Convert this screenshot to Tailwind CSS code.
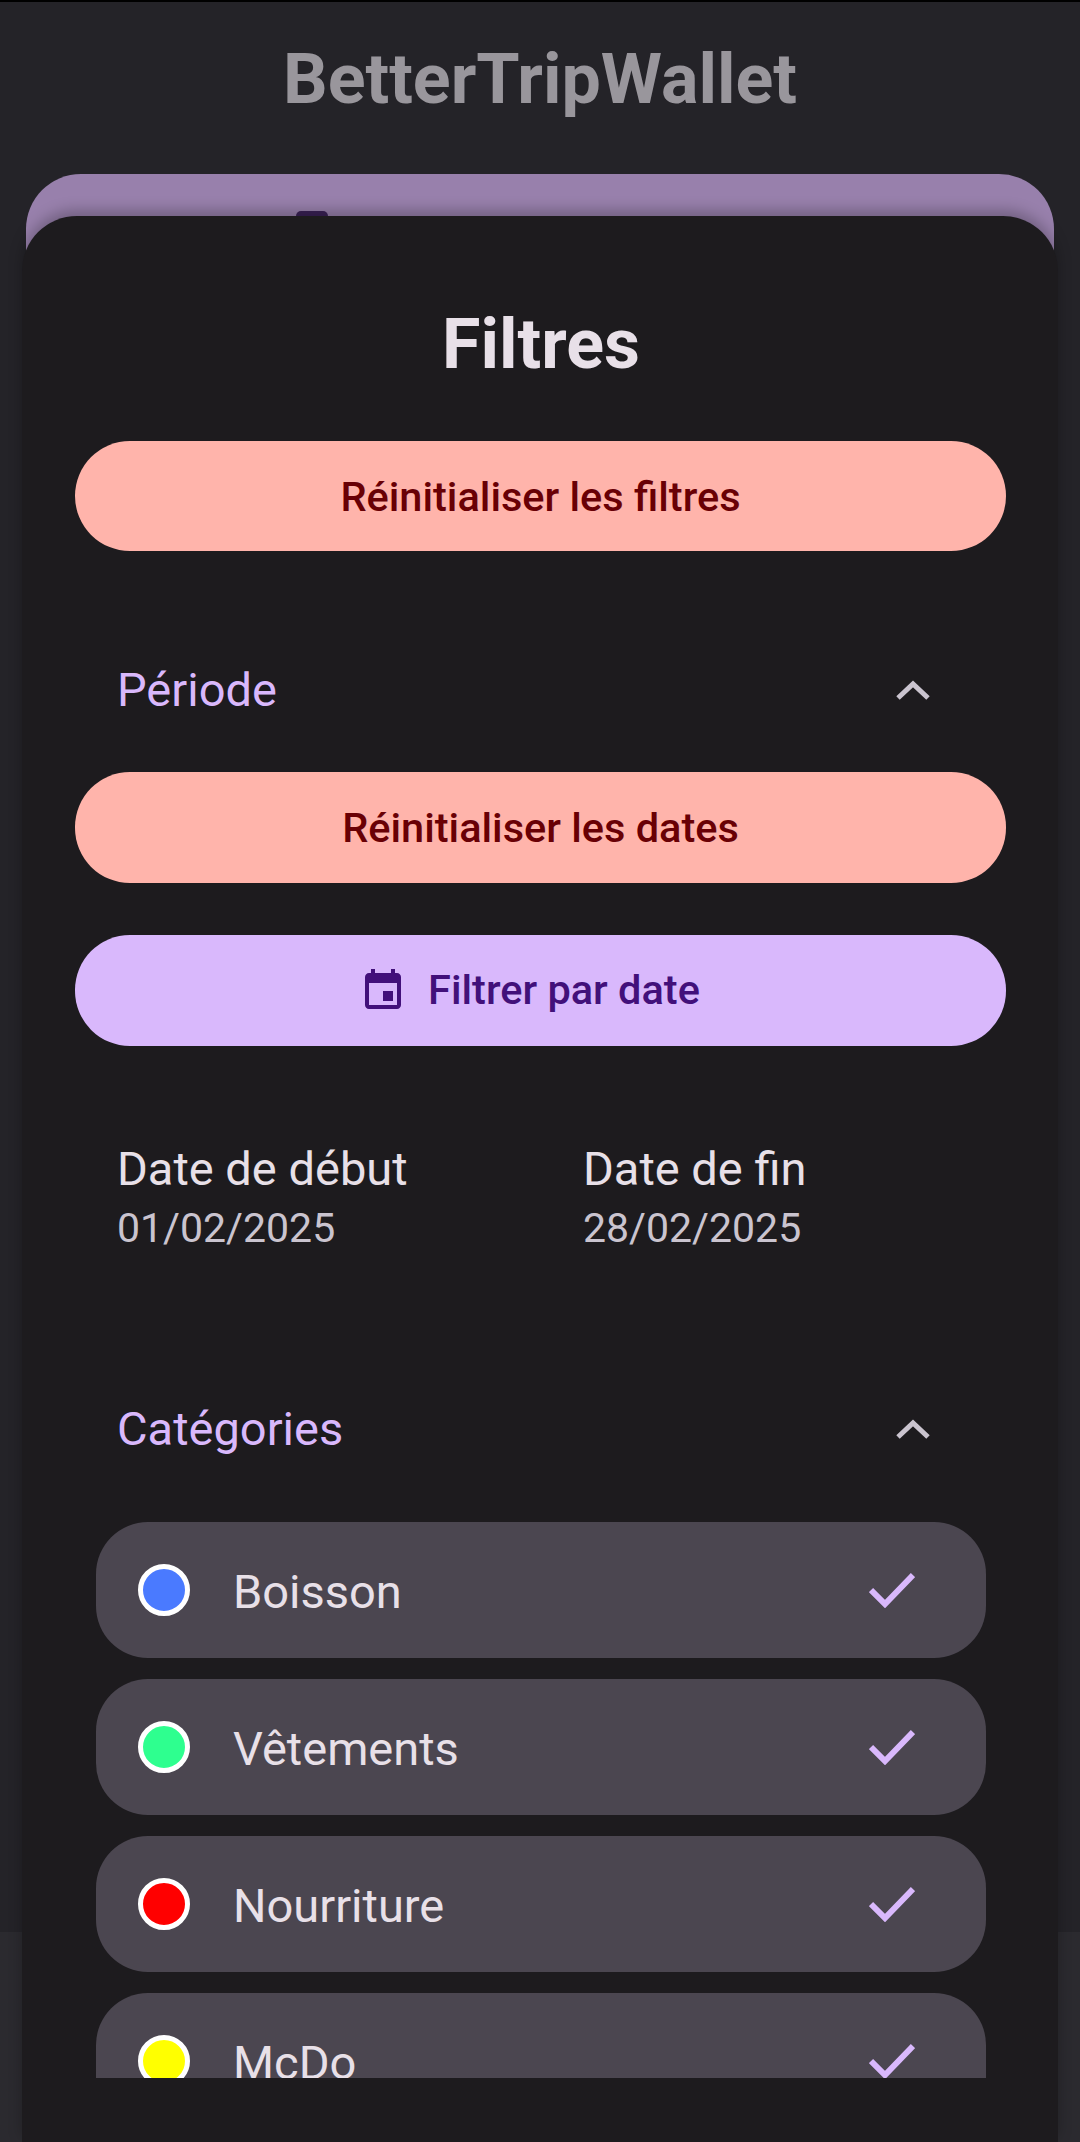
<!DOCTYPE html>
<html lang="fr">
<head>
    <meta charset="UTF-8">
    <title>BetterTripWallet - Filtres</title>
    <script src="https://cdn.jsdelivr.net/npm/@tailwindcss/browser@4"></script>
</head>
<body class="bg-[#242328] font-['Roboto',sans-serif]">
<div class="relative w-[1080px] h-[2142px] overflow-hidden">

    <!-- page behind the sheet, dimmed by the scrim -->
    <div class="h-[2px] bg-black"></div>
    <h1 class="mt-[38px] text-center text-[70px] leading-[78px] font-bold text-[#99969c]">BetterTripWallet</h1>
    <div class="mt-[56px] mx-[26px] h-[300px] rounded-t-[55px] bg-[#9880ac] flex justify-center gap-[32px] pt-[34px] pr-[10px]">
        <div class="mt-[3px] w-[32px] h-[32px] rounded-[5px] bg-[#3a2156]"></div>
        <div class="text-[41.5px] leading-[48px] font-medium text-[#3a2156]">Filtrer les transactions</div>
    </div>
    <div class="absolute left-0 right-0 top-[1932px] bottom-0 bg-[#2b2a2f]"></div>

    <!-- bottom sheet -->
    <div class="absolute left-[22px] right-[22px] top-[216px] bottom-0 rounded-t-[55px] bg-[#1d1b1e] shadow-[0_-6px_14px_rgba(0,0,0,0.25)]">
        <h2 class="pt-[89px] pl-[2px] text-center text-[70px] leading-[78px] font-bold text-[#e8e0e8]">Filtres</h2>

        <div class="mt-[58px] ml-[53px] mr-[52px] h-[1637px] overflow-hidden flex flex-col">
            <button class="h-[110px] shrink-0 rounded-[55px] bg-[#ffb4ab] text-[#690005] text-[41.5px] font-medium pt-[2px]">Réinitialiser les filtres</button>

            <div class="mt-[115px] h-[48px] shrink-0 flex items-center justify-between pl-[42px] pr-[76px]">
                <span class="text-[47px] text-[#d9b8fc]">Période</span>
                <svg class="w-[34px] h-[20px]" viewBox="0 0 34 20" fill="none" stroke="#cac4cf" stroke-width="5"><path d="M2 18 L17 4 L32 18"/></svg>
            </div>

            <button class="mt-[58px] h-[111px] shrink-0 rounded-[55px] bg-[#ffb4ab] text-[#690005] text-[41.5px] font-medium pt-[2px]">Réinitialiser les dates</button>

            <button class="mt-[52px] h-[111px] shrink-0 rounded-[55px] bg-[#d9b8fc] text-[#42107a] text-[41.5px] font-medium flex items-center justify-center gap-[21px] pr-[22px]">
                <svg class="w-[48px] h-[48px]" viewBox="0 0 24 24" fill="#42107a"><path d="M17 12h-5v5h5v-5zM16 1v2H8V1H6v2H5c-1.11 0-1.99.9-1.99 2L3 19c0 1.1.89 2 2 2h14c1.1 0 2-.9 2-2V5c0-1.1-.9-2-2-2h-1V1h-2zm3 18H5V8h14v11z"/></svg>
                Filtrer par date
            </button>

            <div class="mt-[95px] shrink-0 flex pl-[42px]">
                <div class="w-[466px]">
                    <div class="text-[47px] leading-[56px] text-[#e8e0e8]">Date de début</div>
                    <div class="mt-[6px] text-[41px] leading-[50px] text-[#cac4cf]">01/02/2025</div>
                </div>
                <div>
                    <div class="text-[47px] leading-[56px] text-[#e8e0e8]">Date de fin</div>
                    <div class="mt-[6px] text-[41px] leading-[50px] text-[#cac4cf]">28/02/2025</div>
                </div>
            </div>

            <div class="mt-[152px] h-[48px] shrink-0 flex items-center justify-between pl-[42px] pr-[76px]">
                <span class="text-[47px] text-[#d9b8fc]">Catégories</span>
                <svg class="w-[34px] h-[20px]" viewBox="0 0 34 20" fill="none" stroke="#cac4cf" stroke-width="5"><path d="M2 18 L17 4 L32 18"/></svg>
            </div>

            <div class="mt-[69px] shrink-0 pl-[21px] pr-[20px] flex flex-col gap-[21px]">
                <div class="h-[136px] shrink-0 rounded-[52px] bg-[#4b4650] flex items-center pl-[42px] pr-[71px]">
                    <span class="w-[52px] h-[52px] rounded-full border-[5px] border-white bg-[#4a7aff]"></span>
                    <span class="ml-[43px] pt-[5px] text-[47px] text-[#e8e0e8] flex-1">Boisson</span>
                    <svg class="w-[46px] h-[36px]" viewBox="0 0 46 36" fill="none" stroke="#d9b8fc" stroke-width="6"><path d="M2 18 L16 32 L44 3"/></svg>
                </div>
                <div class="h-[136px] shrink-0 rounded-[52px] bg-[#4b4650] flex items-center pl-[42px] pr-[71px]">
                    <span class="w-[52px] h-[52px] rounded-full border-[5px] border-white bg-[#2eff8f]"></span>
                    <span class="ml-[43px] pt-[5px] text-[47px] text-[#e8e0e8] flex-1">Vêtements</span>
                    <svg class="w-[46px] h-[36px]" viewBox="0 0 46 36" fill="none" stroke="#d9b8fc" stroke-width="6"><path d="M2 18 L16 32 L44 3"/></svg>
                </div>
                <div class="h-[136px] shrink-0 rounded-[52px] bg-[#4b4650] flex items-center pl-[42px] pr-[71px]">
                    <span class="w-[52px] h-[52px] rounded-full border-[5px] border-white bg-[#ff0000]"></span>
                    <span class="ml-[43px] pt-[5px] text-[47px] text-[#e8e0e8] flex-1">Nourriture</span>
                    <svg class="w-[46px] h-[36px]" viewBox="0 0 46 36" fill="none" stroke="#d9b8fc" stroke-width="6"><path d="M2 18 L16 32 L44 3"/></svg>
                </div>
                <div class="h-[136px] shrink-0 rounded-[52px] bg-[#4b4650] flex items-center pl-[42px] pr-[71px]">
                    <span class="w-[52px] h-[52px] rounded-full border-[5px] border-white bg-[#ffff00]"></span>
                    <span class="ml-[43px] pt-[5px] text-[47px] text-[#e8e0e8] flex-1">McDo</span>
                    <svg class="w-[46px] h-[36px]" viewBox="0 0 46 36" fill="none" stroke="#d9b8fc" stroke-width="6"><path d="M2 18 L16 32 L44 3"/></svg>
                </div>
            </div>
        </div>
    </div>
</div>
</body>
</html>
